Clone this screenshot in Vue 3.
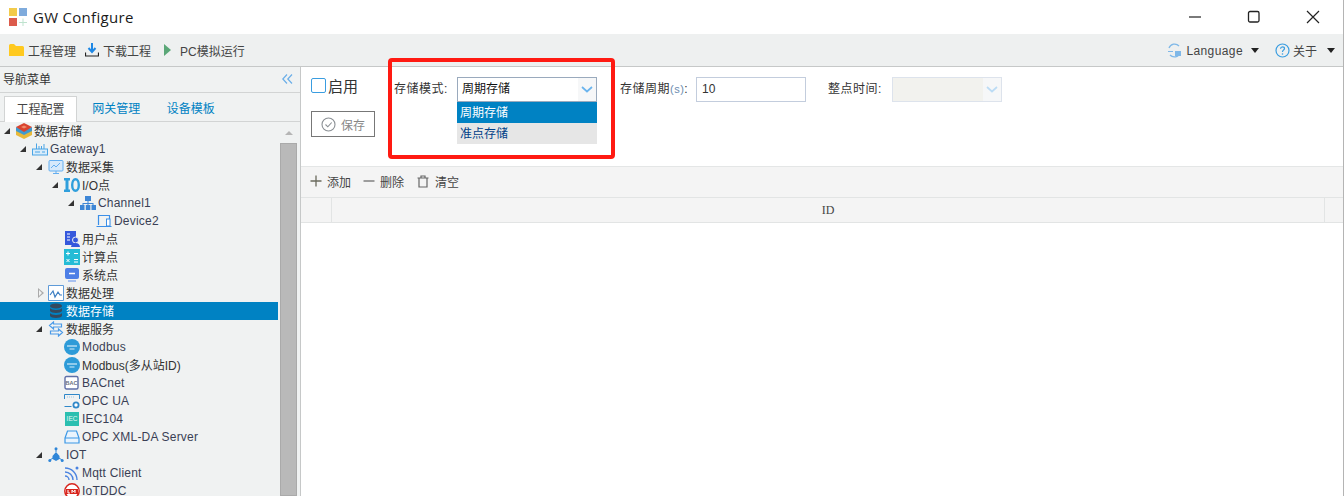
<script setup>
const rows = [
  { l: 0, a: 'open', i: 'stack', t: '数据存储' },
  { l: 1, a: 'open', i: 'gateway', t: 'Gateway1' },
  { l: 2, a: 'open', i: 'monitor', t: '数据采集' },
  { l: 3, a: 'open', i: 'io', t: 'I/O点' },
  { l: 4, a: 'open', i: 'net', t: 'Channel1' },
  { l: 5, a: '', i: 'device', t: 'Device2' },
  { l: 3, a: '', i: 'user', t: '用户点' },
  { l: 3, a: '', i: 'calc', t: '计算点' },
  { l: 3, a: '', i: 'sys', t: '系统点' },
  { l: 2, a: 'closed', i: 'wave', t: '数据处理' },
  { l: 2, a: '', i: 'db', t: '数据存储', sel: true },
  { l: 2, a: 'open', i: 'swap', t: '数据服务' },
  { l: 3, a: '', i: 'modbus', t: 'Modbus' },
  { l: 3, a: '', i: 'modbus', t: 'Modbus(多从站ID)' },
  { l: 3, a: '', i: 'bac', t: 'BACnet' },
  { l: 3, a: '', i: 'opc', t: 'OPC UA' },
  { l: 3, a: '', i: 'iec', t: 'IEC104' },
  { l: 3, a: '', i: 'xml', t: 'OPC XML-DA Server' },
  { l: 2, a: 'open', i: 'iot', t: 'IOT' },
  { l: 3, a: '', i: 'mqtt', t: 'Mqtt Client' },
  { l: 3, a: '', i: 'ddc', t: 'IoTDDC' },
]
const hasCjk = (s) => /[\u4e00-\u9fff]/.test(s)
</script>

<template>
  <div class="app">
    <header class="titlebar">
      <svg class="logo" width="20" height="20" viewBox="0 0 20 20">
        <rect x="0" y="0" width="8" height="8" fill="#f2cb4b" />
        <rect x="10" y="0" width="8" height="8" fill="#7fabdc" />
        <rect x="0" y="10" width="8" height="8" fill="#dc5b4c" />
        <path d="M14 10.500v7.500M10 14.500h8" stroke="#bfe3cf" stroke-width="1" fill="none" />
      </svg>
      <span class="title">GW Configure</span>
      <div class="winbtns">
        <svg width="14" height="14" viewBox="0 0 14 14"><path d="M1 7h12" stroke="#222" stroke-width="1.200" /></svg>
        <svg width="14" height="14" viewBox="0 0 14 14"><rect x="1.500" y="1.500" width="10.500" height="10.500" rx="1.500" fill="none" stroke="#222" stroke-width="1.300" /></svg>
        <svg width="14" height="14" viewBox="0 0 14 14"><path d="M1 1l12 12M13 1L1 13" stroke="#222" stroke-width="1.200" /></svg>
      </div>
    </header>

    <div class="toolbar">
      <div class="tool tool1">
        <svg width="15" height="12" viewBox="0 0 15 12"><path d="M0 1.500Q0 0 1.500 0H5l2 2h6.500Q15 2 15 3.500V12H0z" fill="#ffc91f" /></svg>
        <span>工程管理</span>
      </div>
      <div class="tool tool2">
        <svg width="14" height="14" viewBox="0 0 14 14"><path d="M7 0v8M3.500 5L7 9l3.500-4" fill="none" stroke="#1e88e5" stroke-width="2" /><path d="M.5 9.500v3.500h13V9.500" fill="none" stroke="#222" stroke-width="1.200" /></svg>
        <span>下载工程</span>
      </div>
      <div class="tool tool3">
        <svg width="8" height="12" viewBox="0 0 8 12"><path d="M0 0l7 6-7 6z" fill="#5aa777" /></svg>
        <span>PC模拟运行</span>
      </div>
      <div class="tool-right">
        <div class="tool">
          <svg width="15" height="15" viewBox="0 0 15 15"><path d="M2 5A6 6 0 0 1 12 3M13 10A6 6 0 0 1 3 12" fill="none" stroke="#7fb8e8" stroke-width="1.300" /><path d="M1 8h5v1H1zM8 8h6v5H8z" fill="#7fb8e8" /></svg>
          <span class="lang">Language</span>
          <i class="caret"></i>
        </div>
        <div class="tool about">
          <svg width="15" height="15" viewBox="0 0 15 15"><circle cx="7.500" cy="7.500" r="6.500" fill="none" stroke="#3a9de0" stroke-width="1.200" /><path d="M5.500 5.800Q5.700 3.800 7.500 3.800 9.500 3.800 9.500 5.500 9.500 6.500 8.300 7.200 7.500 7.700 7.500 9" fill="none" stroke="#3a9de0" stroke-width="1.200" /><circle cx="7.500" cy="11" r=".8" fill="#3a9de0" /></svg>
          <span>关于</span>
          <i class="caret"></i>
        </div>
      </div>
    </div>

    <div class="body">
      <aside class="side">
        <div class="side-head">
          <span>导航菜单</span>
          <svg width="11" height="10" viewBox="0 0 11 10"><path d="M5 .5L.8 5 5 9.500M10 .5L5.800 5 10 9.500" fill="none" stroke="#6aaee8" stroke-width="1.200" /></svg>
        </div>
        <div class="tabs">
          <div class="tab active">工程配置</div>
          <div class="tab second">网关管理</div>
          <div class="tab">设备模板</div>
        </div>
        <div class="tree-wrap">
          <div class="tree">
            <div v-for="(r, n) in rows" :key="n" class="row" :class="{ sel: r.sel }" :style="{ paddingLeft: r.l * 16 + 'px' }">
              <span class="arrow" :class="r.a"></span>
              <svg class="ico" width="16" height="16" viewBox="0 0 16 16">
                <g v-if="r.i === 'stack'">
                  <path d="M8 9l8-3v6l-8 4-8-4V6z" fill="#e8b93a" />
                  <path d="M8 7l8-3v4l-8 4-8-4V4z" fill="#3f9ad0" />
                  <path d="M8 0l8 4-8 5-8-5z" fill="#d9432f" />
                  <path d="M5 4l3-1.500L11 4 8 5.500z" fill="#f08a6a" />
                </g>
                <g v-else-if="r.i === 'gateway'">
                  <rect x=".5" y="8" width="15" height="6" fill="#d9ecfa" stroke="#4aa5e6" />
                  <path d="M4.500 8V2.500M7 8V5M9.500 8V5M12 8V3" stroke="#4aa5e6" fill="none" />
                  <path d="M3 11h5M10 11h3" stroke="#4aa5e6" fill="none" />
                </g>
                <g v-else-if="r.i === 'monitor'">
                  <rect x="1" y="1.500" width="14" height="10.500" rx="1" fill="#d5e9fb" stroke="#63aef0" />
                  <path d="M3 9l3-3 2 2 4-4M5 14.500h6M8 12v2" stroke="#63aef0" fill="none" />
                </g>
                <g v-else-if="r.i === 'io'">
                  <path d="M0 1h6v2.500H4.500v9H6V15H0v-2.500h1.500v-9H0z" fill="#2f9fdc" />
                  <ellipse cx="11.500" cy="8" rx="3.300" ry="5.800" fill="none" stroke="#2f9fdc" stroke-width="2.400" />
                </g>
                <g v-else-if="r.i === 'net'" fill="#3d86d6">
                  <rect x="5" y="1" width="6" height="5" />
                  <path d="M7.500 6h1v2h5v2h-1V9h-4v1h-1V9h-4v1h-1V8h5z" />
                  <rect x="0" y="10" width="4.500" height="5" />
                  <rect x="5.800" y="10" width="4.500" height="5" />
                  <rect x="11.500" y="10" width="4.500" height="5" />
                </g>
                <g v-else-if="r.i === 'device'">
                  <path d="M2.500 12V2.500h11V12M.5 13.500h15" fill="none" stroke="#3b8fe8" stroke-width="1.200" />
                  <rect x="10.500" y="6" width="3.500" height="7" fill="#fff" stroke="#3b8fe8" />
                </g>
                <g v-else-if="r.i === 'user'">
                  <rect x="1" y="0" width="11" height="14" fill="#3558dc" />
                  <path d="M3 3h3M3 6h3M3 9h3" stroke="#fff" />
                  <circle cx="11.500" cy="9" r="3" fill="#3558dc" stroke="#f0f2f2" />
                  <path d="M7 16q.5-4 4.500-4t4.500 4z" fill="#3558dc" />
                </g>
                <g v-else-if="r.i === 'calc'">
                  <rect width="16" height="16" fill="#25bcd6" />
                  <path d="M2 4.500h4M4 2.500v4M10 4.500h4M2.500 10l3 3M5.500 10l-3 3M10 10.500h4M10 13h4" stroke="#fff" fill="none" />
                </g>
                <g v-else-if="r.i === 'sys'">
                  <rect x="1" y="1" width="14" height="11" rx="2" fill="#4d7fe6" />
                  <path d="M5 6.500h6" stroke="#fff" stroke-width="1.500" />
                  <path d="M4 14h8" stroke="#8fb0ef" stroke-width="1.500" />
                </g>
                <g v-else-if="r.i === 'wave'">
                  <path d="M.5 15.500V.5h15v15z" fill="#fff" stroke="#5f9bd8" />
                  <path d="M2 10l3-4 2 6 3-5 2 3h2" fill="none" stroke="#3d7fc2" stroke-width="1.200" />
                </g>
                <g v-else-if="r.i === 'db'" fill="#34495e">
                  <ellipse cx="8" cy="3" rx="6" ry="2.500" />
                  <path d="M2 5c1 2.500 11 2.500 12 0v3c-1 2.500-11 2.500-12 0zM2 10c1 2.500 11 2.500 12 0v3c-1 2.500-11 2.500-12 0z" />
                </g>
                <g v-else-if="r.i === 'swap'" fill="none" stroke="#4a9ae8" stroke-width="1.200">
                  <path d="M5.500 1L1.500 4.500 5.500 8V6h8V3h-8z" />
                  <path d="M10.500 8l4 3.500-4 3.500v-2h-8v-3h8z" />
                </g>
                <g v-else-if="r.i === 'modbus'">
                  <circle cx="8" cy="8" r="8" fill="#2d9bd8" />
                  <path d="M3 7h10" stroke="#d5ecf8" stroke-width="1.200" />
                  <path d="M5.500 10h5" stroke="#d5ecf8" />
                </g>
                <g v-else-if="r.i === 'bac'">
                  <rect x="1" y="1.500" width="13" height="12.500" rx="1.500" fill="#fff" stroke="#5f6fa8" stroke-width="1.400" />
                  <text x="7.500" y="10" class="bac-t" text-anchor="middle">BAC</text>
                </g>
                <g v-else-if="r.i === 'opc'">
                  <path d="M.5 6V1.500h15V6M.5 13.500h7" fill="none" stroke="#2f88c9" />
                  <path d="M3 4h8" stroke="#9cc7e6" stroke-dasharray="1 1" />
                  <circle cx="12" cy="12" r="2.600" fill="#fff" stroke="#2f88c9" stroke-width="1.800" />
                </g>
                <g v-else-if="r.i === 'iec'">
                  <rect x="1" y="1" width="14" height="14" fill="#2bbfb0" />
                  <text x="8" y="10" class="iec-t" text-anchor="middle">IEC</text>
                </g>
                <g v-else-if="r.i === 'xml'">
                  <path d="M1 9l2.500-7h9L15 9v5H1z" fill="#eaf4fd" stroke="#3a97e6" stroke-width="1.200" />
                  <path d="M1 9h14" stroke="#3a97e6" />
                </g>
                <g v-else-if="r.i === 'iot'" fill="#2f86d8">
                  <circle cx="8" cy="1.800" r="1.500" />
                  <circle cx="1.800" cy="13.500" r="1.500" />
                  <circle cx="14.200" cy="13.500" r="1.500" />
                  <path d="M8 5l3.500 4v3L8 14l-3.500-2V9z" />
                  <path d="M8 2v3M2 13l3-2M14 13l-3-2" stroke="#2f86d8" fill="none" />
                </g>
                <g v-else-if="r.i === 'mqtt'" fill="none" stroke="#4a83e0" stroke-width="1.400">
                  <path d="M1 3a12 12 0 0 1 12 12M1 7a8 8 0 0 1 8 8M1 11a4 4 0 0 1 4 4" />
                  <circle cx="13" cy="3" r="1.500" fill="#4a83e0" stroke="none" />
                </g>
                <g v-else-if="r.i === 'ddc'">
                  <circle cx="8" cy="8" r="7.200" fill="#fff" stroke="#d8241c" stroke-width="1.500" />
                  <path d="M2 6h12v5H2z" fill="#d8241c" />
                  <path d="M4 7v3h2M8 10V7l1.500 2L11 7v3" stroke="#fff" fill="none" />
                </g>
              </svg>
              <span class="txt" :class="{ cjk: hasCjk(r.t) }">{{ r.t }}</span>
            </div>
          </div>
          <div class="scroll">
            <i class="up"></i>
            <div class="thumb"></div>
          </div>
        </div>
      </aside>

      <main class="main">
        <section class="form">
          <div class="col-left">
            <label class="check"><i class="box"></i><span>启用</span></label>
            <button class="save">
              <svg width="15" height="15" viewBox="0 0 15 15"><circle cx="7.500" cy="7.500" r="6.500" fill="none" stroke="#8a8f94" stroke-width="1.100" /><path d="M4.500 7.500l2.300 2.300 3.900-4.300" fill="none" stroke="#8a8f94" stroke-width="1.100" /></svg>
              <span>保存</span>
            </button>
          </div>
          <span class="lbl lbl1">存储模式:</span>
          <div class="select">
            <span class="val">周期存储</span>
            <span class="sel-arrow"><svg width="12" height="7" viewBox="0 0 12 7"><path d="M1 1l5 4.500L11 1" fill="none" stroke="#6ab4ee" stroke-width="1.700" /></svg></span>
            <ul class="menu">
              <li class="on">周期存储</li>
              <li>准点存储</li>
            </ul>
          </div>
          <span class="lbl lbl2">存储周期<em>(s)</em>:</span>
          <div class="input">10</div>
          <span class="lbl lbl3">整点时间:</span>
          <div class="select disabled">
            <span class="val"></span>
            <span class="sel-arrow"><svg width="12" height="7" viewBox="0 0 12 7"><path d="M1 1l5 4.500L11 1" fill="none" stroke="#bcdcf5" stroke-width="1.700" /></svg></span>
          </div>
          <div class="redbox"></div>
        </section>

        <div class="actions">
          <div class="act">
            <svg width="12" height="12" viewBox="0 0 12 12"><path d="M6 .5v11M.5 6h11" stroke="#6b6b5e" stroke-width="1.300" /></svg>
            <span>添加</span>
          </div>
          <div class="act">
            <svg width="12" height="12" viewBox="0 0 12 12"><path d="M.5 6h11" stroke="#808080" stroke-width="1.500" /></svg>
            <span>删除</span>
          </div>
          <div class="act act3">
            <svg width="12" height="13" viewBox="0 0 12 13"><path d="M2 3.500V12h8V3.500M.5 3h11M4 3V1h4v2" fill="none" stroke="#666" stroke-width="1.200" /></svg>
            <span>清空</span>
          </div>
        </div>
        <div class="thead">
          <div class="th-chk"></div>
          <div class="th-id">ID</div>
          <div class="th-end"></div>
        </div>
        <div class="tbody"></div>
      </main>
    </div>
  </div>
</template>

<style>
html, body { margin: 0; padding: 0; background: #fff; }
</style>

<style scoped>
.app {
  width: 1344px;
  height: 496px;
  box-sizing: border-box;
  border-right: 1px solid #b4b4b4;
  overflow: hidden;
  display: flex;
  flex-direction: column;
  font: 12px "Liberation Sans", "Noto Sans CJK SC", sans-serif;
  color: #333;
  background: #fff;
}
.titlebar {
  height: 34px;
  flex: none;
  display: flex;
  align-items: center;
  padding-left: 9px;
}
.logo { margin-top: 2px; }
.title {
  margin-left: 4px;
  font: 15px "Open Sans", sans-serif;
  letter-spacing: .3px;
  color: #1a1a1a;
}
.winbtns {
  margin-left: auto;
  display: flex;
  gap: 45px;
  padding-right: 23px;
}
.winbtns svg { display: block; }

.toolbar {
  height: 33px;
  flex: none;
  display: flex;
  align-items: center;
  background: #eef0f0;
  border-bottom: 1px solid #c6c8c8;
  box-sizing: border-box;
  padding-left: 9px;
}
.tool { display: flex; align-items: center; gap: 4px; color: #444; }
.tool2 { margin-left: 9px; }
.tool3 { margin-left: 13px; gap: 8px; }
.tool-right { margin-left: auto; display: flex; align-items: center; gap: 16px; padding-right: 8px; }
.lang { letter-spacing: .4px; margin-right: 4px; padding-top: 2px; }
.about { gap: 3px; }
.about span { margin-right: 7px; }
.caret {
  width: 0; height: 0;
  border-left: 4px solid transparent;
  border-right: 4px solid transparent;
  border-top: 5px solid #222;
}

.body { flex: 1; min-height: 0; display: flex; }
.side {
  width: 301px;
  flex: none;
  box-sizing: border-box;
  background: #f0f2f2;
  border-right: 1px solid #c6c8c8;
  display: flex;
  flex-direction: column;
}
.side-head {
  height: 26px;
  flex: none;
  box-sizing: border-box;
  display: flex;
  align-items: center;
  justify-content: space-between;
  padding: 0 7px 2px 3px;
  border-bottom: 1px solid #d2d4d4;
  color: #333;
}
.tabs {
  height: 29px;
  flex: none;
  box-sizing: border-box;
  display: flex;
  align-items: flex-end;
  padding-left: 4px;
  border-bottom: 1px solid #d2d4d4;
}
.tab {
  height: 25px;
  line-height: 27px;
  width: 74.500px;
  text-align: center;
  color: #0082c3;
}
.tab.second { margin-left: 2px; }
.tab.active {
  width: 73px;
  height: 26px;
  margin-bottom: -1px;
  background: #fff;
  border: 1px solid #d2d4d4;
  border-bottom: 0;
  box-sizing: border-box;
  color: #444;
}
.tree-wrap { flex: 1; min-height: 0; display: flex; }
.tree { width: 278px; flex: none; overflow: hidden; }
.row {
  height: 18px;
  display: flex;
  align-items: center;
  color: #333;
}
.row .txt { margin-left: 2px; white-space: nowrap; letter-spacing: .2px; color: #3a3f55; }
.row .txt.cjk { margin-bottom: 2px; letter-spacing: 0; color: #333; }
.row.sel { background: #0082c3; }
.row.sel .txt { color: #fff; }
.ico { flex: none; }
.bac-t { font: bold 5.500px "Liberation Sans", sans-serif; fill: #6a7080; }
.iec-t { font: 6.500px "Liberation Sans", sans-serif; fill: #e6f7f5; }
.arrow { width: 16px; height: 18px; flex: none; position: relative; }
.arrow.open::after {
  content: "";
  position: absolute;
  left: 4px; top: 6px;
  width: 0; height: 0;
  border-left: 6px solid transparent;
  border-bottom: 6px solid #333;
}
.arrow.closed::before {
  content: "";
  position: absolute;
  left: 6px; top: 4px;
  width: 0; height: 0;
  border-top: 5px solid transparent;
  border-bottom: 5px solid transparent;
  border-left: 6px solid #aaa;
}
.arrow.closed::after {
  content: "";
  position: absolute;
  left: 7px; top: 6px;
  width: 0; height: 0;
  border-top: 3px solid transparent;
  border-bottom: 3px solid transparent;
  border-left: 3px solid #f0f2f2;
}
.scroll {
  margin-left: 1px;
  width: 19px;
  display: flex;
  flex-direction: column;
  align-items: center;
}
.up {
  margin-top: 9px;
  width: 0; height: 0;
  border-left: 4px solid transparent;
  border-right: 4px solid transparent;
  border-bottom: 4px solid #b5b5b5;
}
.thumb {
  margin-top: 8px;
  width: 17px;
  flex: 1;
  background: #b9b9b9;
  border: 1px solid #aaa;
  box-sizing: border-box;
}

.main { flex: 1; min-width: 0; display: flex; flex-direction: column; }
.form {
  position: relative;
  height: 100px;
  flex: none;
  display: flex;
  align-items: flex-start;
  padding: 10px 0 0 10px;
  box-sizing: border-box;
  border-bottom: 1px solid #e4e6e6;
}
.col-left { width: 83px; flex: none; }
.check {
  display: flex;
  align-items: center;
  height: 20px;
  margin-top: -2px;
  font-size: 15px;
  color: #333;
}
.box {
  width: 13px; height: 13px;
  border: 1px solid #3a9de0;
  border-radius: 2px;
  margin-right: 2px;
}
.save {
  margin-top: 16px;
  width: 64px;
  height: 26px;
  background: #fff;
  border: 1px solid #777;
  display: flex;
  align-items: center;
  justify-content: center;
  gap: 5px;
  padding: 0;
  font: inherit;
  color: #888;
}
.lbl { line-height: 24px; color: #333; white-space: nowrap; letter-spacing: .5px; }
.lbl em { font-style: normal; color: #6c8db0; font-size: 11px; }
.lbl1 { width: 63px; flex: none; }
.lbl2 { margin-left: 23px; width: 76px; flex: none; }
.lbl3 { margin-left: 22px; width: 64px; flex: none; }
.select {
  position: relative;
  width: 140px;
  height: 25px;
  flex: none;
  box-sizing: border-box;
  border: 1px solid #9aaabd;
  display: flex;
  background: #fff;
}
.select .val { flex: 1; padding-left: 4px; line-height: 23px; color: #111; }
.sel-arrow {
  width: 18px;
  background: #f6f7f8;
  display: flex;
  align-items: center;
  justify-content: center;
}
.select.disabled {
  width: 110px;
  border-color: #dde3ec;
}
.select.disabled .val { background: #f2f2ee; }
.menu {
  position: absolute;
  left: -1px;
  top: 24px;
  width: 140px;
  margin: 0;
  padding: 0;
  list-style: none;
  z-index: 2;
}
.menu li {
  height: 21px;
  line-height: 22px;
  padding-left: 3px;
  background: #e6e6e6;
  color: #003f88;
}
.menu li.on { background: #0082c3; color: #fff; }
.input {
  width: 110px;
  height: 25px;
  flex: none;
  box-sizing: border-box;
  border: 1px solid #c3cddd;
  line-height: 23px;
  padding-left: 5px;
  color: #333;
}
.redbox {
  position: absolute;
  left: 87px;
  top: -9px;
  width: 227px;
  height: 101px;
  box-sizing: border-box;
  border: 4px solid #ff1a12;
  border-radius: 4px;
  pointer-events: none;
}
.actions {
  height: 31px;
  flex: none;
  display: flex;
  align-items: center;
  gap: 12px;
  padding: 0 0 2px 9px;
  background: #f4f4f4;
  border-bottom: 1px solid #e2e4e4;
  box-sizing: border-box;
}
.act { display: flex; align-items: center; gap: 5px; color: #444; }
.act3 { margin-left: 1px; gap: 6px; }
.thead {
  height: 25px;
  flex: none;
  display: flex;
  box-sizing: border-box;
  background: #f4f4f4;
  border-bottom: 1px solid #e2e4e4;
}
.th-chk { width: 30px; border-right: 1px solid #e2e4e4; }
.th-id {
  flex: 1;
  text-align: center;
  line-height: 24px;
  font-family: "Liberation Serif", serif;
  color: #444;
}
.th-end { width: 18px; border-left: 1px solid #e2e4e4; }
.tbody { flex: 1; }
</style>
